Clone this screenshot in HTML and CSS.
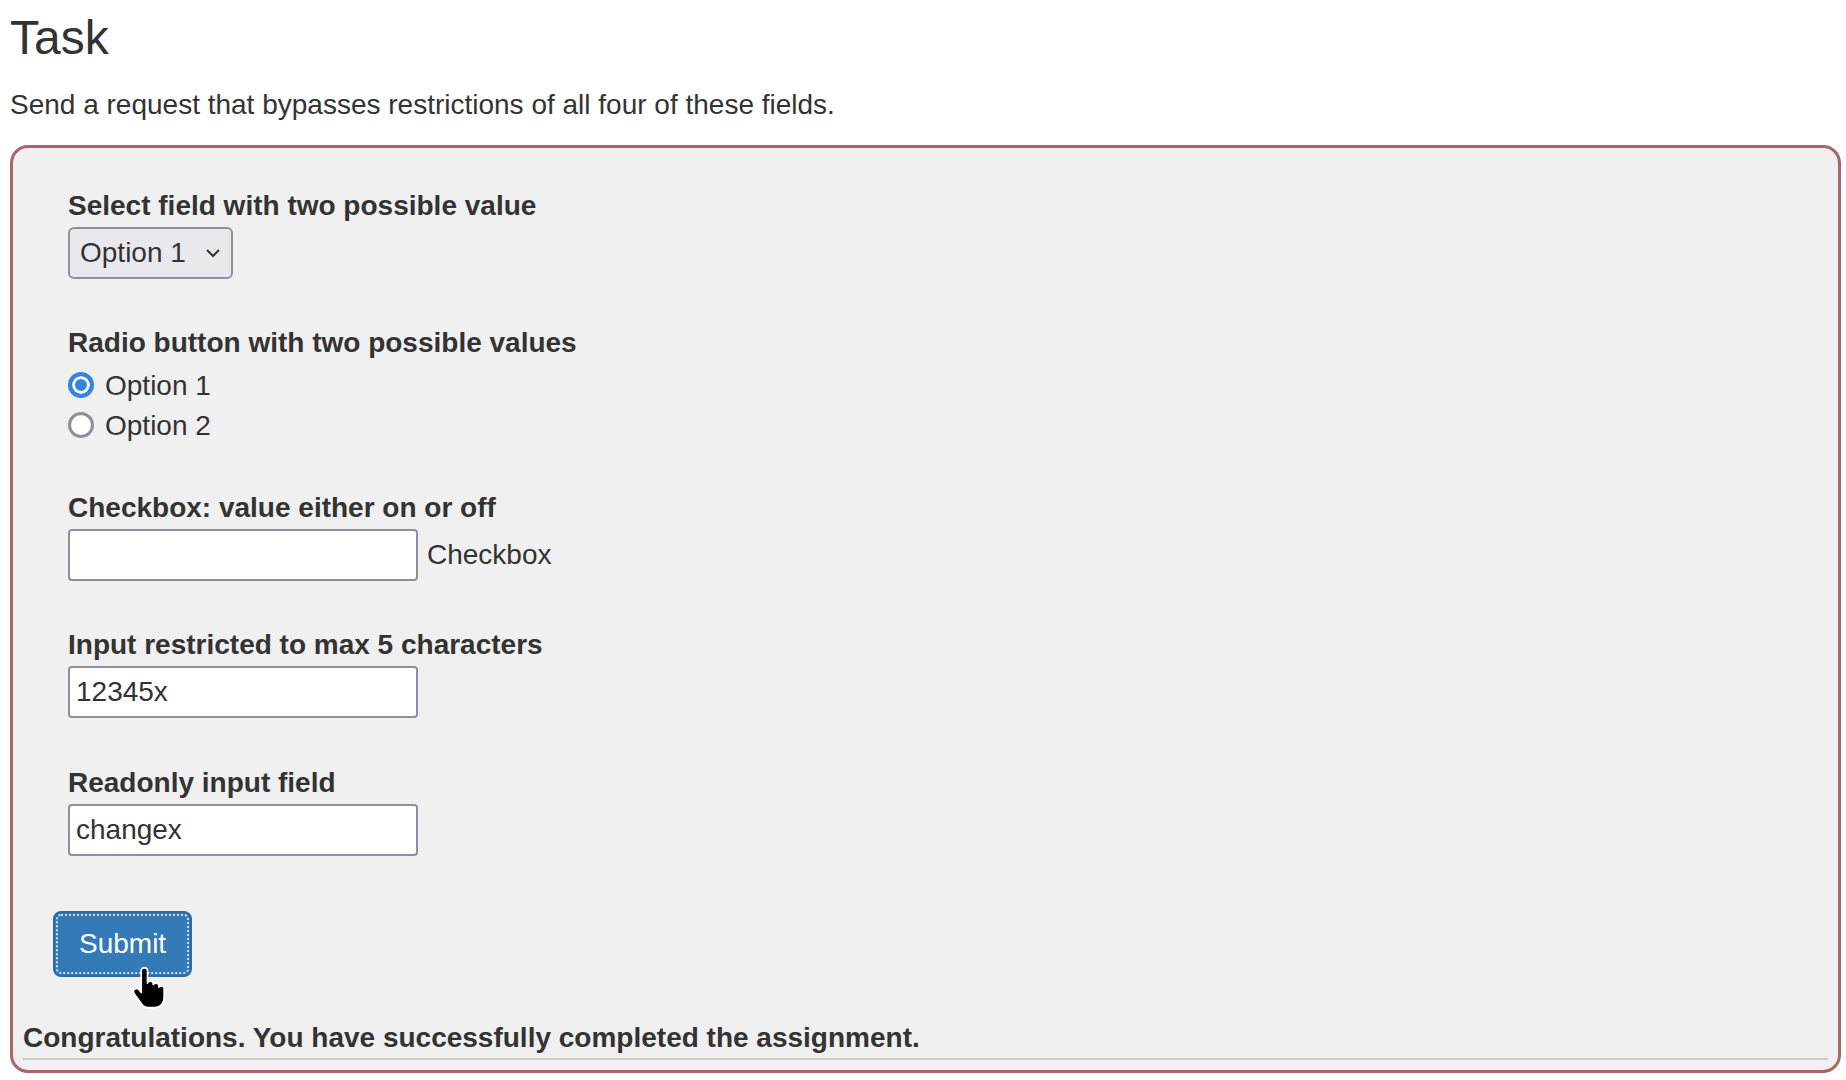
FILE: index.html
```html
<!DOCTYPE html>
<html lang="en">
<head>
<meta charset="utf-8">
<title>Task</title>
<link rel="stylesheet" href="styles.css">
</head>
<body>
<div class="page">
  <h3 class="title">Task</h3>
  <p class="intro">Send a request that bypasses restrictions of all four of these fields.</p>
  <div class="attack-container">
    <div class="container-fluid">
      <form class="attack-form">
        <div class="field">
          <label class="field-label">Select field with two possible value</label>
          <div class="control">
            <div class="select">
              <span class="select-text">Option 1</span>
              <svg class="chevron" width="16" height="10" viewBox="0 0 16 10"><polyline points="2,2 8,8 14,2" fill="none" stroke="#333" stroke-width="2"/></svg>
            </div>
          </div>
        </div>
        <div class="field">
          <label class="field-label">Radio button with two possible values</label>
          <div class="radios">
            <div class="radio-row"><input class="radio" type="radio" name="radio" value="option1" checked><span class="radio-text">Option 1</span></div>
            <div class="radio-row"><input class="radio" type="radio" name="radio" value="option2"><span class="radio-text">Option 2</span></div>
          </div>
        </div>
        <div class="field">
          <label class="field-label">Checkbox: value either on or off</label>
          <div class="control">
            <input class="text-input" type="text" name="checkbox" value="">
            <span class="after-text">Checkbox</span>
          </div>
        </div>
        <div class="field">
          <label class="field-label">Input restricted to max 5 characters</label>
          <div class="control">
            <input class="text-input" type="text" name="shortInput" value="12345x">
          </div>
        </div>
        <div class="field field-last">
          <label class="field-label">Readonly input field</label>
          <div class="control">
            <input class="text-input" type="text" name="readOnlyField" value="changex">
          </div>
        </div>
        <button type="button" class="btn-submit">Submit</button>
      </form>
    </div>
    <div class="attack-feedback">Congratulations. You have successfully completed the assignment.</div>
  </div>
  <svg class="cursor" width="41" height="44" viewBox="0 0 26 28">
    <path d="M9 2.2C9 1.1 9.9 0.5 11 0.5C12.1 0.5 13 1.1 13 2.2V10.2C13.3 9.4 14 9 14.9 9C15.9 9 16.7 9.6 16.7 10.6V11.2C17 10.6 17.7 10.3 18.5 10.3C19.5 10.3 20.3 11 20.3 12V12.8C20.6 12.3 21.2 12 21.9 12C22.9 12 23.6 12.7 23.6 13.7V19.5C23.6 23 21.3 25.8 17.8 25.8H13.6C11.6 25.8 10.2 24.9 9.2 23.5L4.4 16.8C3.7 15.8 3.9 14.6 4.9 14C5.9 13.4 7.1 13.7 7.8 14.6L9 16.2Z" fill="#000" stroke="#fff" stroke-width="1.1" stroke-linejoin="round"/>
  </svg>
</div>
</body>
</html>
```

FILE: styles.css
```css
* {
  box-sizing: border-box;
}

html,
body {
  margin: 0;
  padding: 0;
  background: #fff;
}

body {
  font-family: "Liberation Sans", Arial, sans-serif;
  font-size: 28px;
  line-height: 40px;
  color: #333;
}

.page {
  position: relative;
  padding: 0 5px 0 10px;
}

.title {
  margin: 12px 0 20px;
  font-size: 48px;
  line-height: 52.8px;
  font-weight: normal;
  color: #333;
}

.intro {
  margin: 0 0 20px;
}

.attack-container {
  border: 3px solid #aa6666;
  border-radius: 18px;
  background: #f0f0f0;
  padding: 10px;
}

.container-fluid {
  padding: 28px 30px 0;
}

.attack-form {
  margin: 0;
}

.field {
  padding-left: 15px;
  margin-bottom: 44.5px;
}

.field-last {
  margin-bottom: 55px;
}

.field-label {
  display: block;
  height: 40px;
  font-weight: bold;
}

.control {
  display: flex;
  align-items: center;
  padding-top: 1px;
  height: 53px;
}

.select {
  display: flex;
  align-items: center;
  width: 165px;
  height: 52px;
  padding: 0 10px 0 10px;
  border: 2px solid #8f8f9d;
  border-radius: 6px;
  background: #e9e9ed;
  color: #333;
}

.select-text {
  flex: 1;
}

.chevron {
  display: block;
}

.radios {
  height: 80px;
}

.radio-row {
  display: flex;
  align-items: flex-start;
  height: 40px;
}

.radio {
  appearance: none;
  -webkit-appearance: none;
  width: 26px;
  height: 26px;
  margin: 8.5px 11px 0 0;
  border: 3px solid #8f8f9d;
  border-radius: 50%;
  background: #fff;
}

.radio:checked {
  border: 4px solid #3584e4;
  background: #3584e4;
  box-shadow: inset 0 0 0 3px #fff;
}

.radio-text {
  padding-top: 3px;
  line-height: 40px;
}

.text-input {
  width: 350px;
  height: 52px;
  margin: 0;
  padding: 0 6px;
  border: 2px solid #8f8f9d;
  border-radius: 4px;
  background: #fff;
  font-family: "Liberation Sans", Arial, sans-serif;
  font-size: 28px;
  color: #333;
  outline: none;
}

.after-text {
  margin-left: 9px;
}

.btn-submit {
  position: relative;
  display: block;
  margin: 0;
  padding: 11px 24px;
  border: 2px solid #2e6da4;
  border-radius: 8px;
  background: #337ab7;
  color: #fff;
  font-family: "Liberation Sans", Arial, sans-serif;
  font-size: 28px;
  line-height: 40px;
}

.btn-submit::after {
  content: "";
  position: absolute;
  inset: 1px;
  border: 2px dotted rgba(255, 255, 255, 0.75);
  border-radius: 5px;
}

.attack-feedback {
  margin-top: 41px;
  border-bottom: 2px solid #cacaca;
  font-weight: bold;
}

.cursor {
  position: absolute;
  left: 127px;
  top: 955px;
}
```
